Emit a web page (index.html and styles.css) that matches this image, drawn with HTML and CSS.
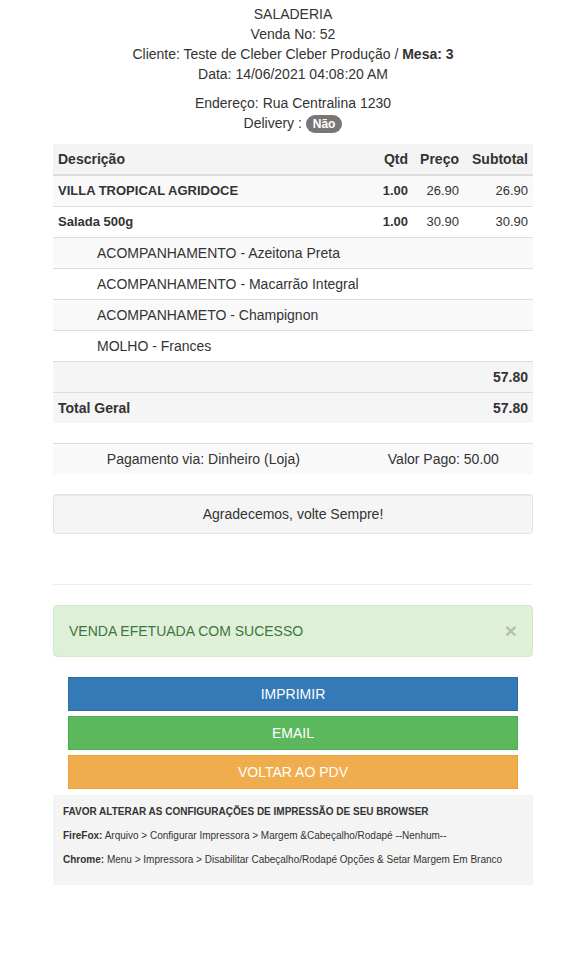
FILE: index.html
```html
<!DOCTYPE html>
<html lang="pt-BR">
<head>
<meta charset="utf-8">
<title>Venda 52</title>
<link rel="stylesheet" href="styles.css">
</head>
<body>
<div class="page">
  <div class="head">
    <div>SALADERIA</div>
    <div>Venda No: 52</div>
    <div>Cliente: Teste de Cleber Cleber Produção / <b>Mesa: 3</b></div>
    <div>Data: 14/06/2021 04:08:20 AM</div>
  </div>
  <div class="addr">
    <div>Endereço: Rua Centralina 1230</div>
    <div>Delivery : <span class="badge">Não</span></div>
  </div>

  <table class="items">
    <thead>
      <tr>
        <th>Descrição</th>
        <th class="num c-qtd">Qtd</th>
        <th class="num c-preco">Preço</th>
        <th class="num c-sub">Subtotal</th>
      </tr>
    </thead>
    <tbody>
      <tr class="odd prod">
        <td><b>VILLA TROPICAL AGRIDOCE</b></td>
        <td class="num"><b>1.00</b></td>
        <td class="num">26.90</td>
        <td class="num">26.90</td>
      </tr>
      <tr class="prod">
        <td><b>Salada 500g</b></td>
        <td class="num"><b>1.00</b></td>
        <td class="num">30.90</td>
        <td class="num">30.90</td>
      </tr>
      <tr class="odd">
        <td class="sub" colspan="4">ACOMPANHAMENTO - Azeitona Preta</td>
      </tr>
      <tr>
        <td class="sub" colspan="4">ACOMPANHAMENTO - Macarrão Integral</td>
      </tr>
      <tr class="odd">
        <td class="sub" colspan="4">ACOMPANHAMETO - Champignon</td>
      </tr>
      <tr>
        <td class="sub" colspan="4">MOLHO - Frances</td>
      </tr>
      <tr class="tot">
        <td colspan="3"></td>
        <td class="num"><b>57.80</b></td>
      </tr>
      <tr class="tot">
        <td colspan="3"><b>Total Geral</b></td>
        <td class="num"><b>57.80</b></td>
      </tr>
    </tbody>
  </table>

  <table class="pay">
    <tr>
      <td>Pagamento via: Dinheiro (Loja)</td>
      <td>Valor Pago: 50.00</td>
    </tr>
  </table>

  <div class="well">Agradecemos, volte Sempre!</div>

  <hr class="sep">

  <div class="alert">
    <span>VENDA EFETUADA COM SUCESSO</span>
    <span class="close">×</span>
  </div>

  <div class="actions">
    <a href="#" class="btn btn-primary">IMPRIMIR</a>
    <a href="#" class="btn btn-success">EMAIL</a>
    <a href="#" class="btn btn-warning">VOLTAR AO PDV</a>
  </div>

  <div class="note">
    <p><b>FAVOR ALTERAR AS CONFIGURAÇÕES DE IMPRESSÃO DE SEU BROWSER</b></p>
    <p><b>FireFox:</b> Arquivo &gt; Configurar Impressora &gt; Margem &amp;Cabeçalho/Rodapé --Nenhum--</p>
    <p><b>Chrome:</b> Menu &gt; Impressora &gt; Disabilitar Cabeçalho/Rodapé Opções &amp; Setar Margem Em Branco</p>
  </div>
</div>
</body>
</html>
```
FILE: styles.css
```css
* {
  box-sizing: border-box;
}

html,
body {
  margin: 0;
  padding: 0;
  background: #fff;
}

body {
  font-family: "Liberation Sans", Arial, sans-serif;
  font-size: 14px;
  line-height: 20px;
  color: #333;
}

.page {
  width: 480px;
  margin-left: 53px;
  padding-top: 4px;
  padding-bottom: 40px;
}

.head,
.addr {
  text-align: center;
}

.addr {
  margin-top: 9px;
}

.badge {
  display: inline-block;
  min-width: 10px;
  padding: 3px 7px;
  font-size: 12px;
  font-weight: bold;
  line-height: 1;
  color: #fff;
  background: #777;
  border-radius: 10px;
  vertical-align: middle;
  white-space: nowrap;
}

.items {
  width: 100%;
  border-collapse: collapse;
  border-spacing: 0;
  margin-top: 11px;
}

.items th,
.items td {
  padding: 5px;
  line-height: 20px;
  border-top: 1px solid #ddd;
  text-align: left;
  vertical-align: top;
}

.items thead th {
  border-top: 0;
  border-bottom: 2px solid #ddd;
  background: #f4f4f4;
  font-weight: bold;
}

.items .prod td {
  font-size: 13px;
}

.items .num {
  text-align: right;
  white-space: nowrap;
}

.items .c-qtd {
  width: 36px;
}

.items .c-preco {
  width: 51px;
}

.items .c-sub {
  width: 69px;
}

.items .sub {
  padding-left: 44px;
}

.items .odd td {
  background: #f9f9f9;
}

.items .tot td {
  background: #f5f5f5;
}

.pay {
  width: 100%;
  border-collapse: collapse;
  border-spacing: 0;
  margin-top: 20px;
}

.pay td {
  padding: 5px;
  line-height: 20px;
  text-align: center;
  border-top: 1px solid #ddd;
  background: #f9f9f9;
}

.well {
  margin-top: 20px;
  padding: 9px;
  text-align: center;
  background: #f5f5f5;
  border: 1px solid #e3e3e3;
  border-radius: 3px;
  box-shadow: inset 0 1px 1px rgba(0, 0, 0, 0.05);
}

.sep {
  margin: 50px 0 0;
  border: 0;
  border-top: 1px solid #eee;
  height: 0;
}

.alert {
  margin-top: 20px;
  padding: 15px;
  display: flex;
  justify-content: space-between;
  align-items: center;
  color: #3c763d;
  background: #dff0d8;
  border: 1px solid #d6e9c6;
  border-radius: 4px;
}

.close {
  font-size: 21px;
  font-weight: bold;
  line-height: 20px;
  height: 20px;
  color: #000;
  opacity: 0.2;
  text-shadow: 0 1px 0 #fff;
}

.actions {
  margin-top: 20px;
  padding: 0 15px;
}

.btn {
  display: block;
  width: 100%;
  padding: 6px 12px;
  font-size: 14px;
  line-height: 20px;
  text-align: center;
  color: #fff;
  text-decoration: none;
  border: 1px solid transparent;
  border-radius: 0;
}

.btn + .btn {
  margin-top: 5px;
}

.btn-primary {
  background: #337ab7;
  border-color: #2e6da4;
}

.btn-success {
  background: #5cb85c;
  border-color: #4cae4c;
}

.btn-warning {
  background: #f0ad4e;
  border-color: #eea236;
}

.note {
  margin-top: 6px;
  padding: 10px 10px 0;
  background: #f4f4f4;
  font-size: 10px;
  line-height: 14px;
  height: 90px;
}

.note p {
  margin: 0 0 10px;
}
```
